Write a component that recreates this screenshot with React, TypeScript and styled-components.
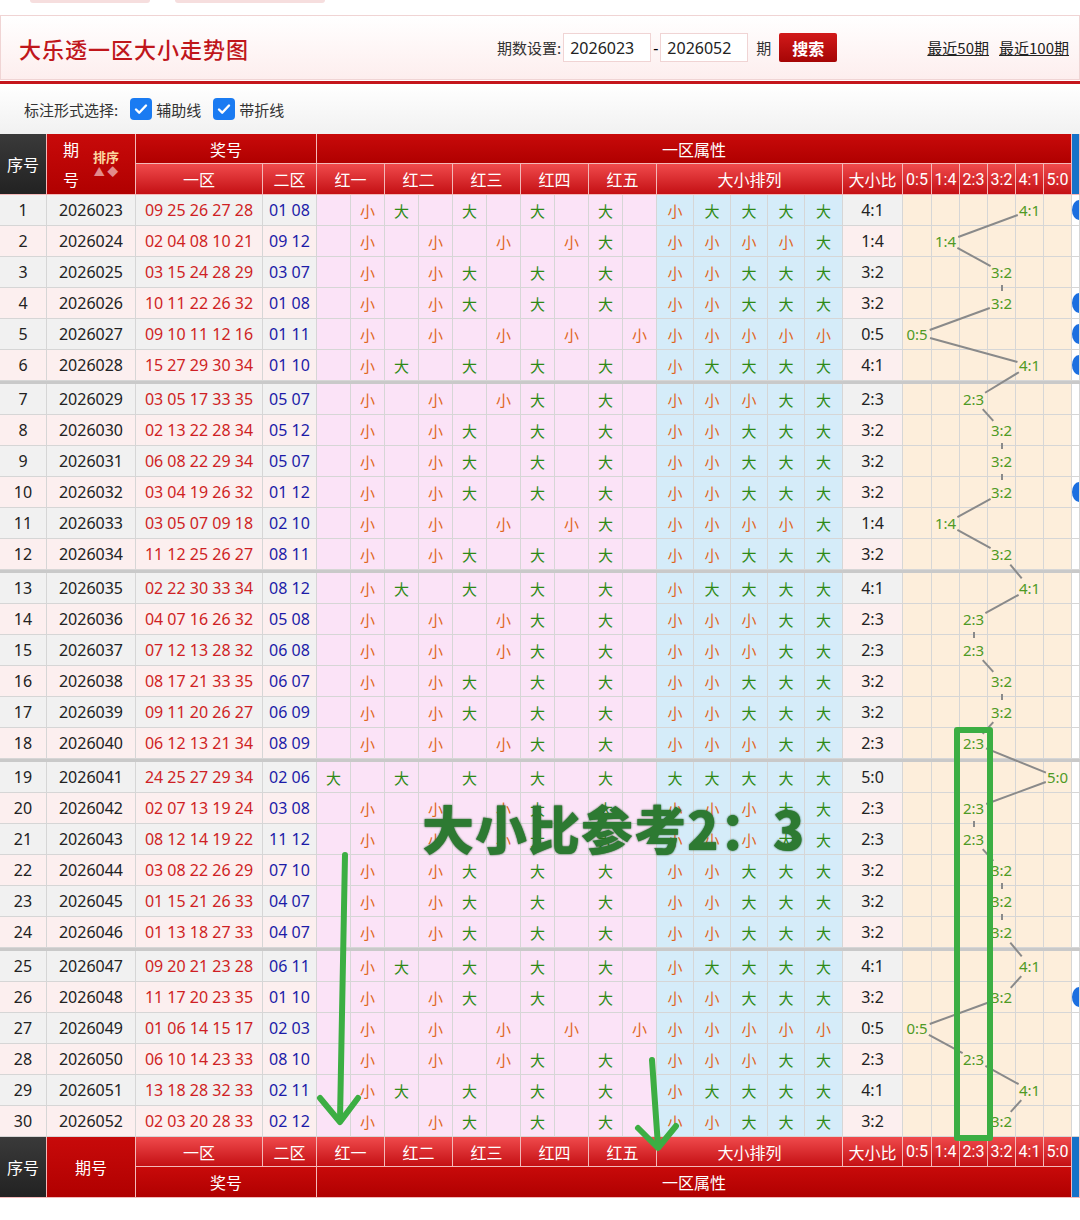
import React from 'react';
import styled, { createGlobalStyle } from 'styled-components';

const GlobalStyle = createGlobalStyle`
  body { margin: 0; background: #fff; font-family: "Noto Sans", "Noto Sans CJK SC", sans-serif; }
`;

const COLS = '47px 89px 127px 54px repeat(10, 34px) 37px 37px 37px 37px 38px 60px 29px repeat(5, 28px) 8px';
const ROW_H = 31;
const SEP = 3;
const CJK = '"Noto Sans CJK SC", "Noto Sans", sans-serif';

const RAW = `2026023 09 25 26 27 28|01 08
2026024 02 04 08 10 21|09 12
2026025 03 15 24 28 29|03 07
2026026 10 11 22 26 32|01 08
2026027 09 10 11 12 16|01 11
2026028 15 27 29 30 34|01 10
2026029 03 05 17 33 35|05 07
2026030 02 13 22 28 34|05 12
2026031 06 08 22 29 34|05 07
2026032 03 04 19 26 32|01 12
2026033 03 05 07 09 18|02 10
2026034 11 12 25 26 27|08 11
2026035 02 22 30 33 34|08 12
2026036 04 07 16 26 32|05 08
2026037 07 12 13 28 32|06 08
2026038 08 17 21 33 35|06 07
2026039 09 11 20 26 27|06 09
2026040 06 12 13 21 34|08 09
2026041 24 25 27 29 34|02 06
2026042 02 07 13 19 24|03 08
2026043 08 12 14 19 22|11 12
2026044 03 08 22 26 29|07 10
2026045 01 15 21 26 33|04 07
2026046 01 13 18 27 33|04 07
2026047 09 20 21 23 28|06 11
2026048 11 17 20 23 35|01 10
2026049 01 06 14 15 17|02 03
2026050 06 10 14 23 33|08 10
2026051 13 18 28 32 33|02 11
2026052 02 03 20 28 33|02 12`;

const rows = RAW.split('\n').map((line) => {
  const [left, blue] = line.split('|');
  const [issue, ...red] = left.split(' ');
  const big = red.map((n) => Number(n) >= 18);
  const bigCount = big.filter(Boolean).length;
  return { issue, red: red.join(' '), blue, big, bigCount };
});

const RATIOS = ['0:5', '1:4', '2:3', '3:2', '4:1', '5:0'];
const RATIO_X = [917.5, 946, 974, 1002, 1030, 1058];
const BLUE_DOTS = [0, 3, 4, 5, 9, 25];

const rowTop = (i: number) => i * ROW_H + Math.floor(i / 6) * SEP;

const Page = styled.div`
  position: relative;
  width: 1080px;
  height: 1220px;
  overflow: hidden;
`;

const TopStrip = styled.div`
  height: 15px;
  display: flex;
  gap: 25px;
  padding-left: 30px;
  & > span {
    width: 120px;
    height: 3px;
    border-radius: 0 0 4px 4px;
    background: #f6dede;
  }
`;

const HeaderBox = styled.header`
  height: 63px;
  display: flex;
  align-items: center;
  padding: 0 0 0 18px;
  border: 1px solid #f0d4d4;
  background: linear-gradient(#fff, #fdeeee);
  white-space: nowrap;
`;

const Title = styled.h1`
  margin: 0;
  flex: 1;
  font-family: ${CJK};
  font-size: 22px;
  font-weight: 500;
  letter-spacing: 1px;
  color: #c0161b;
`;

const Label = styled.span`
  font-family: ${CJK};
  font-size: 15px;
  color: #333;
`;

const Input = styled.div`
  width: 80px;
  height: 27px;
  margin: 0 2px;
  display: flex;
  align-items: center;
  padding-left: 6px;
  border: 1px solid #f0d4d4;
  background: #fff;
  font-size: 16px;
  color: #222;
`;

const SearchButton = styled.button`
  margin: 0 90px 0 8px;
  width: 58px;
  height: 29px;
  border: 0;
  border-radius: 2px;
  background: linear-gradient(#d21a1a, #a50505);
  color: #fff;
  font-family: ${CJK};
  font-size: 16px;
  font-weight: 700;
`;

const RecentLink = styled.a`
  margin-right: 10px;
  font-family: ${CJK};
  font-size: 15px;
  color: #222;
  text-decoration: underline;
`;

const RedRule = styled.div`
  height: 3px;
  margin-top: 1px;
  background: #c4161c;
`;

const Options = styled.div`
  height: 50px;
  display: flex;
  align-items: center;
  gap: 4px;
  padding-left: 24px;
  background: linear-gradient(#fff, #f1f1f1);
  font-family: ${CJK};
  font-size: 15px;
  color: #333;
`;

const Check = styled.span`
  width: 22px;
  height: 22px;
  margin-left: 8px;
  border-radius: 4px;
  background: #1a7bf2;
  display: inline-flex;
  align-items: center;
  justify-content: center;
`;

const HeadGrid = styled.div<{ $rows: string }>`
  display: grid;
  grid-template-columns: ${COLS};
  grid-template-rows: ${(p) => p.$rows};
`;

const HeadCell = styled.div<{ $col: string; $row: string; $tone: 'dark' | 'top' | 'sub' | 'blue' }>`
  grid-column: ${(p) => p.$col};
  grid-row: ${(p) => p.$row};
  display: flex;
  align-items: center;
  justify-content: center;
  overflow: hidden;
  white-space: nowrap;
  border-right: 1px solid #f3b9b9;
  border-bottom: 1px solid #f3b9b9;
  font-family: ${CJK};
  font-size: 16px;
  color: #fff;
  background: ${(p) =>
    p.$tone === 'dark'
      ? 'linear-gradient(#3a3a3a, #222)'
      : p.$tone === 'top'
        ? 'linear-gradient(#c80a0a, #b00000)'
        : p.$tone === 'blue'
          ? '#1672c8'
          : 'linear-gradient(#f04a4c, #c41014)'};
`;

const IssueHead = styled.div`
  display: flex;
  align-items: center;
  gap: 14px;
  font-size: 16px;
  line-height: 30px;
`;

const SortTag = styled.div`
  display: flex;
  flex-direction: column;
  align-items: center;
  font-size: 13px;
  font-weight: 700;
  color: #fbd7a0;
  line-height: 14px;
  & > i { font-style: normal; color: #e38b8b; font-size: 11px; }
`;

const Body = styled.div`
  position: relative;
`;

const Row = styled.div<{ $sep: boolean }>`
  display: grid;
  grid-template-columns: ${COLS};
  height: ${ROW_H}px;
  margin-top: ${(p) => (p.$sep ? SEP : 0)}px;
  box-shadow: ${(p) => (p.$sep ? `0 -${SEP}px 0 #c9c9c9` : 'none')};
`;

const Cell = styled.div<{ $bg: string; $color?: string }>`
  display: flex;
  align-items: center;
  justify-content: center;
  overflow: hidden;
  white-space: nowrap;
  background: ${(p) => p.$bg};
  color: ${(p) => p.$color || '#222'};
  border-right: 1px solid #d6d6d6;
  border-bottom: 1px solid #d6d6d6;
  font-size: 16px;
`;

const Mark = styled(Cell)<{ $big?: boolean }>`
  font-family: ${CJK};
  font-size: 15px;
  color: ${(p) => (p.$big ? '#2f8a16' : '#e0661c')};
`;

const RatioText = styled.span`
  color: #4f9a25;
  font-size: 15px;
`;

const Dot = styled.span`
  width: 14px;
  height: 20px;
  margin-left: 6px;
  border-radius: 50%;
  background: #1b6fe0;
  flex-shrink: 0;
`;

const Note = styled.div`
  position: absolute;
  left: 422px;
  top: 790px;
  font-family: ${CJK};
  font-size: 52px;
  font-weight: 900;
  color: #2d7a32;
  letter-spacing: 1px;
  text-shadow: 0 0 2px #14501a;
  white-space: nowrap;
`;

const Overlay = styled.svg`
  position: absolute;
  inset: 0;
  pointer-events: none;
`;

function TrendLines() {
  const pts = rows.map((r, i) => ({ x: RATIO_X[r.bigCount], y: rowTop(i) + 15.5 }));
  const segs = pts.slice(1).map((p, i) => {
    const a = pts[i];
    const dx = p.x - a.x;
    const dy = p.y - a.y;
    const len = Math.hypot(dx, dy) || 1;
    const s = Math.min(13, len / 2.5);
    return (
      <line
        key={i}
        x1={a.x + (dx / len) * s}
        y1={a.y + (dy / len) * s}
        x2={p.x - (dx / len) * s}
        y2={p.y - (dy / len) * s}
        stroke="#8a8a8a"
        strokeWidth={2}
      />
    );
  });
  const bottom = rowTop(29) + ROW_H;
  return (
    <Overlay width={1080} height={bottom}>
      {segs}
    </Overlay>
  );
}

export default function App() {
  const even = (i: number) => (i % 2 === 0 ? '#f1f1f1' : '#fcefef');

  return (
    <Page>
      <GlobalStyle />
      <TopStrip>
        <span />
        <span style={{ width: 150 }} />
      </TopStrip>
      <HeaderBox>
        <Title>大乐透一区大小走势图</Title>
        <Label>期数设置:</Label>
        <Input>2026023</Input>
        <span>-</span>
        <Input>2026052</Input>
        <Label style={{ marginLeft: 6 }}>期</Label>
        <SearchButton>搜索</SearchButton>
        <RecentLink>最近50期</RecentLink>
        <RecentLink>最近100期</RecentLink>
      </HeaderBox>
      <RedRule />
      <Options>
        标注形式选择:
        <Check>
          <svg width="16" height="16" viewBox="0 0 16 16">
            <path d="M3 8.5l3.2 3.2L13 4.5" fill="none" stroke="#fff" strokeWidth="2.4" strokeLinecap="round" strokeLinejoin="round" />
          </svg>
        </Check>
        辅助线
        <Check>
          <svg width="16" height="16" viewBox="0 0 16 16">
            <path d="M3 8.5l3.2 3.2L13 4.5" fill="none" stroke="#fff" strokeWidth="2.4" strokeLinecap="round" strokeLinejoin="round" />
          </svg>
        </Check>
        带折线
      </Options>

      <HeadGrid $rows="30px 31px">
        <HeadCell $col="1" $row="1 / 3" $tone="dark">序号</HeadCell>
        <HeadCell $col="2" $row="1 / 3" $tone="top">
          <IssueHead>
            <span>期<br />号</span>
            <SortTag>排序<i>▲ ◆</i></SortTag>
          </IssueHead>
        </HeadCell>
        <HeadCell $col="3 / 5" $row="1" $tone="top">奖号</HeadCell>
        <HeadCell $col="5 / 27" $row="1" $tone="top">一区属性</HeadCell>
        <HeadCell $col="27" $row="1 / 3" $tone="blue" />
        <HeadCell $col="3" $row="2" $tone="sub">一区</HeadCell>
        <HeadCell $col="4" $row="2" $tone="sub">二区</HeadCell>
        {['红一', '红二', '红三', '红四', '红五'].map((t, k) => (
          <HeadCell key={t} $col={`${5 + k * 2} / span 2`} $row="2" $tone="sub">{t}</HeadCell>
        ))}
        <HeadCell $col="15 / 20" $row="2" $tone="sub">大小排列</HeadCell>
        <HeadCell $col="20" $row="2" $tone="sub">大小比</HeadCell>
        {RATIOS.map((t, k) => (
          <HeadCell key={t} $col={`${21 + k}`} $row="2" $tone="sub" style={{ fontFamily: 'Roboto, sans-serif' }}>{t}</HeadCell>
        ))}
      </HeadGrid>

      <Body>
        {rows.map((r, i) => (
          <Row key={r.issue} $sep={i > 0 && i % 6 === 0}>
            <Cell $bg={even(i)}>{i + 1}</Cell>
            <Cell $bg={even(i)}>{r.issue}</Cell>
            <Cell $bg={even(i)} $color="#cf1f24">{r.red}</Cell>
            <Cell $bg={even(i)} $color="#1c1ca8">{r.blue}</Cell>
            {r.big.map((b, k) => (
              <React.Fragment key={k}>
                <Mark $bg="#fbe3f7" $big>{b ? '大' : ''}</Mark>
                <Mark $bg="#fbe3f7">{b ? '' : '小'}</Mark>
              </React.Fragment>
            ))}
            {r.big.map((b, k) => (
              <Mark key={`p${k}`} $bg="#d5ecf9" $big={b}>{b ? '大' : '小'}</Mark>
            ))}
            <Cell $bg={even(i)}>{`${r.bigCount}:${5 - r.bigCount}`}</Cell>
            {RATIOS.map((t, k) => (
              <Cell key={t} $bg="#fdeedb">{k === r.bigCount ? <RatioText>{t}</RatioText> : null}</Cell>
            ))}
            <Cell $bg="#fff">{BLUE_DOTS.includes(i) ? <Dot /> : null}</Cell>
          </Row>
        ))}
        <TrendLines />
      </Body>

      <HeadGrid $rows="30px 31px">
        <HeadCell $col="1" $row="1 / 3" $tone="dark">序号</HeadCell>
        <HeadCell $col="2" $row="1 / 3" $tone="top">期号</HeadCell>
        <HeadCell $col="3" $row="1" $tone="sub">一区</HeadCell>
        <HeadCell $col="4" $row="1" $tone="sub">二区</HeadCell>
        {['红一', '红二', '红三', '红四', '红五'].map((t, k) => (
          <HeadCell key={t} $col={`${5 + k * 2} / span 2`} $row="1" $tone="sub">{t}</HeadCell>
        ))}
        <HeadCell $col="15 / 20" $row="1" $tone="sub">大小排列</HeadCell>
        <HeadCell $col="20" $row="1" $tone="sub">大小比</HeadCell>
        {RATIOS.map((t, k) => (
          <HeadCell key={t} $col={`${21 + k}`} $row="1" $tone="sub" style={{ fontFamily: 'Roboto, sans-serif' }}>{t}</HeadCell>
        ))}
        <HeadCell $col="27" $row="1 / 3" $tone="blue" />
        <HeadCell $col="3 / 5" $row="2" $tone="top">奖号</HeadCell>
        <HeadCell $col="5 / 27" $row="2" $tone="top">一区属性</HeadCell>
      </HeadGrid>

      <Note>大小比参考2：3</Note>
      <Overlay width={1080} height={1220}>
        <g fill="none" stroke="#3cae43" strokeWidth={6} strokeLinecap="round" strokeLinejoin="round">
          <path d="M345 855 L340 1120" />
          <path d="M320 1098 L340 1122 L358 1098" />
          <path d="M652 1060 L658 1146" />
          <path d="M638 1128 L658 1148 L676 1126" />
          <rect x={957} y={730} width={33} height={408} />
        </g>
      </Overlay>
    </Page>
  );
}
